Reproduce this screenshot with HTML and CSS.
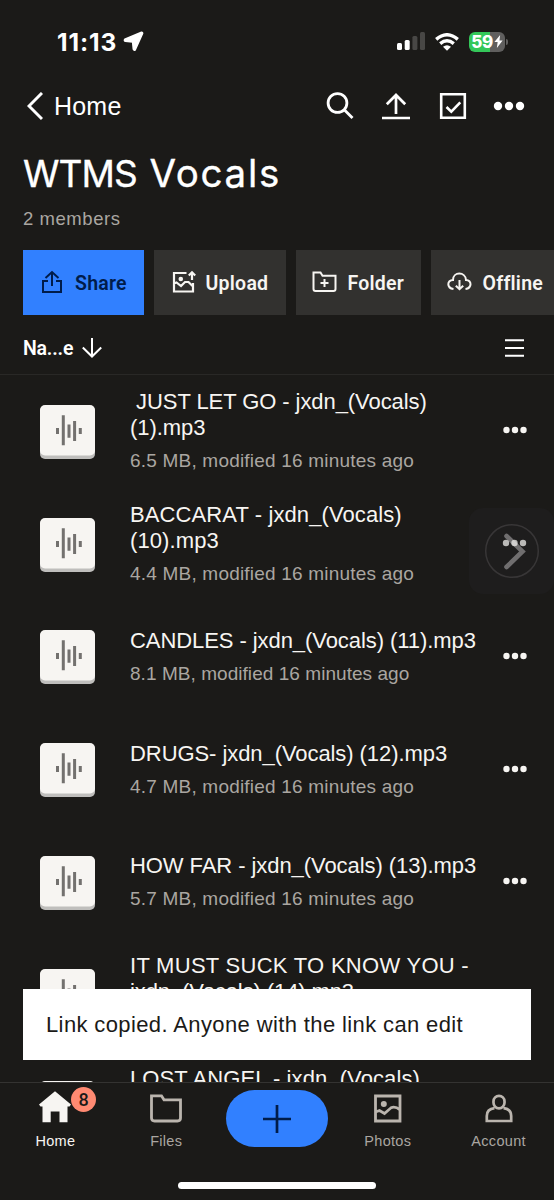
FILE: index.html
```
<!DOCTYPE html>
<html lang="en">
<head>
<meta charset="utf-8">
<title>WTMS Vocals</title>
<link rel="stylesheet" href="styles.css">
</head>
<body>
<svg class="defs" width="0" height="0">
  <symbol id="audio" viewBox="0 0 55 54">
    <rect y="1" width="55" height="53" rx="5" fill="#bfbebc"/>
    <rect width="55" height="50.5" rx="5" fill="#f7f5f2"/>
    <path d="M17.5 23v6M23.3 10.200v30M29 19.500v13.200M34.600 16v20M40.300 23v6" stroke="#73716f" stroke-width="3" fill="none"/>
  </symbol>
  <symbol id="dots" viewBox="0 0 24 8">
    <circle cx="3.500" cy="4" r="3.200"/><circle cx="12" cy="4" r="3.200"/><circle cx="20.500" cy="4" r="3.200"/>
  </symbol>
</svg>
<div class="app">
  <header class="status">
    <span class="time">11:13</span>
    <svg class="loc" width="21" height="21" viewBox="0 0 21 21"><path d="M18.500 1.300 1.800 8.300Q.8 9.600 2.300 10.300L9.600 10.900 10.300 18.300Q11 19.800 12.300 18.800L19.600 2.500Q19.700 1.200 18.500 1.300Z" fill="#fff" stroke="#fff" stroke-width="1.500" stroke-linejoin="round"/></svg>
    <svg class="signal" width="28" height="19" viewBox="0 0 28 19"><g fill="#fff"><rect y="11" width="5" height="7" rx="1.500"/><rect x="7.700" y="8" width="5" height="10" rx="1.500"/></g><g fill="#484745"><rect x="15.400" y="4" width="5" height="14" rx="1.500"/><rect x="23" y="0" width="5" height="18" rx="1.500"/></g></svg>
    <svg class="wifi" width="24" height="18" viewBox="0 0 24 18"><g fill="none" stroke="#fff" stroke-width="3.400"><path d="M1.200 6.400Q12-2.900 22.800 6.400"/><path d="M5.200 10.600Q12 5 18.800 10.600"/></g><path d="M8 13.700Q12 10.700 16 13.700L12 17.700Z" fill="#fff"/></svg>
    <div class="battery"><span>59</span><svg width="9" height="13" viewBox="0 0 8 12"><path d="M5.500 0 .2 6.500h3L2.500 12 7.800 5H4.900Z" fill="#fff"/></svg></div><i class="cap"></i>
  </header>

  <div class="toolbar">
    <svg width="16" height="29" viewBox="0 0 16 29"><path d="M15 1 2 14l13 13" fill="none" stroke="#fff" stroke-width="3"/></svg>
    <span class="back">Home</span>
    <div class="tools">
      <svg width="28" height="28" viewBox="0 0 28 28"><g fill="none" stroke="#fff" stroke-width="2.800"><circle cx="11.500" cy="11" r="9.400"/><path d="m18 17.500 8.500 8.500"/></g></svg>
      <svg width="28" height="28" viewBox="0 0 28 28"><path d="M14 22V3M4.800 12.300 14 3l9.200 9.300M0 26h28" fill="none" stroke="#fff" stroke-width="2.700"/></svg>
      <svg width="28" height="28" viewBox="0 0 28 28"><path d="M2.200 2.200h23.600v23.600H2.200ZM7.500 15l4.800 4.700 9-9.400" fill="none" stroke="#fff" stroke-width="2.600"/></svg>
      <svg class="overflow" width="32" height="10" viewBox="0 0 32 10" fill="#fff"><circle cx="5" cy="5" r="4.200"/><circle cx="16" cy="5" r="4.200"/><circle cx="27" cy="5" r="4.200"/></svg>
    </div>
  </div>

  <h1>WTMS <span>Vocals</span></h1>
  <p class="members">2 members</p>

  <div class="actions">
    <button class="act share"><svg width="22" height="24" viewBox="0 0 22 24"><path d="M7 11H2v11h18V11h-5M11 16V3M4.500 8 11 2l6.500 6" fill="none" stroke="currentColor" stroke-width="2"/></svg><span>Share</span></button>
    <button class="act upload"><svg width="24" height="24" viewBox="0 0 24 24"><path d="M14.500 3H2v18.500h19V13M2 13.500l2.500-1 4.500 3.500 4-4h3.500l4 4M20 10V3M16.800 5.500 20 2.300 23.200 5.500" fill="none" stroke="currentColor" stroke-width="2.200"/><circle cx="8.800" cy="9" r="2.300" fill="currentColor"/></svg><span>Upload</span></button>
    <button class="act folder"><svg width="25" height="22" viewBox="0 0 25 22"><path d="M1.500 1.500h7l2 3.200h13V18q0 2-2 2h-18q-2 0-2-2ZM12.500 8v8M8.500 12h8" fill="none" stroke="currentColor" stroke-width="2"/></svg><span>Folder</span></button>
    <button class="act offline"><svg width="25" height="20" viewBox="0 0 25 20"><path d="M6.500 17C-.5 16-.2 8 6 8 6-.6 18.500-.6 19 8c6 0 6.200 8-.5 9M12.500 8v9M8.800 13.700l3.700 3.500 3.700-3.500" fill="none" stroke="currentColor" stroke-width="2"/></svg><span>Offline</span></button>
  </div>

  <div class="sort"><span>Na...e</span>
    <svg width="20" height="20" viewBox="0 0 20 20"><path d="M10 0v18M.8 9.500 10 18.500l9.200-9" fill="none" stroke="#fff" stroke-width="2"/></svg>
    <svg class="view" width="19" height="18" viewBox="0 0 19 18"><path d="M0 1.200h19M0 9h19M0 16.800h19" stroke="#fff" stroke-width="2"/></svg>
  </div>

  <main class="list">
    <div class="row"><svg class="file"><use href="#audio"/></svg><div class="info"><div class="name">&nbsp;JUST LET GO - jxdn_(Vocals)<br>(1).mp3</div><div class="meta">6.5 MB, modified 16 minutes ago</div></div><svg class="more"><use href="#dots"/></svg></div>
    <div class="row"><svg class="file"><use href="#audio"/></svg><div class="info"><div class="name wide">BACCARAT - jxdn_(Vocals)<br>(10).mp3</div><div class="meta">4.4 MB, modified 16 minutes ago</div></div><svg class="more"><use href="#dots"/></svg></div>
    <div class="row"><svg class="file"><use href="#audio"/></svg><div class="info"><div class="name">CANDLES - jxdn_(Vocals) (11).mp3</div><div class="meta tight">8.1 MB, modified 16 minutes ago</div></div><svg class="more"><use href="#dots"/></svg></div>
    <div class="row"><svg class="file"><use href="#audio"/></svg><div class="info"><div class="name">DRUGS- jxdn_(Vocals) (12).mp3</div><div class="meta">4.7 MB, modified 16 minutes ago</div></div><svg class="more"><use href="#dots"/></svg></div>
    <div class="row"><svg class="file"><use href="#audio"/></svg><div class="info"><div class="name">HOW FAR - jxdn_(Vocals) (13).mp3</div><div class="meta">5.7 MB, modified 16 minutes ago</div></div><svg class="more"><use href="#dots"/></svg></div>
    <div class="row"><svg class="file"><use href="#audio"/></svg><div class="info"><div class="name caps">IT MUST SUCK TO KNOW YOU -<br><span class="wrap">jxdn_(Vocals) (14).mp3</span></div><div class="meta">&nbsp;</div></div></div>
    <div class="row"><svg class="file"><use href="#audio"/></svg><div class="info"><div class="name wide">LOST ANGEL - jxdn_(Vocals)<br>&nbsp;</div><div class="meta">&nbsp;</div></div></div>
  </main>

  <div class="assist"><svg width="56" height="56" viewBox="0 0 56 56"><circle cx="28" cy="28" r="26.300" fill="none" stroke="#383637" stroke-width="1.500"/><path d="M22.500 13 38.500 28.500 22.500 44" fill="none" stroke="#858384" stroke-opacity=".8" stroke-width="4.600" stroke-linecap="round"/><g fill="#f7f5f2" fill-opacity=".72"><circle cx="22" cy="20" r="3.200"/><circle cx="30.500" cy="20" r="3.200"/><circle cx="39" cy="20" r="3.200"/></g></svg></div>
  <div class="toast">Link copied. Anyone with the link can edit</div>

  <nav class="tabs">
    <div class="tab active"><svg width="32" height="32" viewBox="0 0 32 32"><path d="M16 .3 32 13.500 30.500 15.500H28.500V31.300H20.500V20.500H11.700V31.300H3.500V15.500H1.500L0 13.500Z" fill="#f7f5f2"/></svg><span>Home</span><b class="badge">8</b></div>
    <div class="tab"><svg width="32" height="32" viewBox="0 0 32 32"><path d="M1.500 4.800h10l2.500 4h16.500V27q0 3-3 3h-23q-3 0-3-3Z" fill="none" stroke="#bbb5ae" stroke-width="2.800"/></svg><span>Files</span></div>
    <div class="tab plus"><div class="pill"><svg width="28" height="28" viewBox="0 0 28 28"><path d="M14 0v28M0 14h28" stroke="#001c4a" stroke-width="2.700"/></svg></div></div>
    <div class="tab"><svg width="32" height="32" viewBox="0 0 32 32"><path d="M3.500 5h24.500v25H3.500ZM3.500 21l4-1.500 5 3L19 16.800q4-2 9 2" fill="none" stroke="#bbb5ae" stroke-width="2.800"/><circle cx="11.800" cy="13" r="3" fill="#bbb5ae"/></svg><span>Photos</span></div>
    <div class="tab"><svg width="32" height="32" viewBox="0 0 32 32"><g fill="none" stroke="#bbb5ae" stroke-width="2.700"><rect x="10.500" y="4.800" width="11" height="12.500" rx="5.500"/><path d="M11.500 17.200Q3.800 18 3.800 25V30H28.200V25Q28.200 18 20.500 17.200"/></g></svg><span>Account</span></div>
    <i class="indicator"></i>
  </nav>
</div>
</body>
</html>
```

FILE: styles.css
```
* { box-sizing: border-box; }
body { margin: 0; background: #1b1a18; color: #fff; font-family: "Liberation Sans", Arial, sans-serif; }
.defs { position: absolute; }
svg { display: block; flex: none; }
.app { position: relative; width: 554px; height: 1200px; display: flex; flex-direction: column; overflow: hidden; }
.app > * { flex: none; }

.status { height: 83px; display: flex; align-items: center; padding: 0 46px 0 57px; }
.time { width: 60px; font: 700 24.500px/30px Inter, sans-serif; letter-spacing: .9px; white-space: nowrap; }
.loc { margin-left: 6px; }
.signal { margin-left: auto; }
.wifi { margin-left: 10px; }
.battery { margin-left: 10px; width: 36px; height: 20px; border-radius: 6px; background: linear-gradient(90deg, #34c759 59%, #605f5e 59%); display: flex; align-items: center; justify-content: center; gap: 1px; font: 800 17px/20px Inter, sans-serif; letter-spacing: -.5px; }
.cap { width: 2px; height: 6px; margin-left: 1px; border-radius: 0 2px 2px 0; background: #605f5e; }

.toolbar { height: 46px; display: flex; align-items: center; padding: 0 29px 0 27px; }
.back { margin-left: 11px; font-size: 25px; line-height: 30px; letter-spacing: .2px; }
.tools { margin-left: auto; display: flex; align-items: center; gap: 28.500px; }
.overflow { margin-left: -2px; }

h1 { margin: 20px 0 0 23px; height: 48px; font: 400 37px/48px Inter, sans-serif; letter-spacing: -.9px; white-space: nowrap; -webkit-text-stroke: .35px #fff; }
h1 span { margin-left: 3px; font-size: 38.500px; letter-spacing: 1.700px; }
.members { margin: 8.500px 0 0 23px; font-size: 18.500px; line-height: 25px; letter-spacing: .55px; color: #aaa6a1; }

.actions { margin: 19px 0 0 23px; display: flex; gap: 9.500px; height: 65px; }
.act { flex: none; border: 0; padding: 0 0 0 18px; display: flex; align-items: center; background: #32312f; color: #f7f5f2; font: 600 19.500px/26px Roboto, sans-serif; letter-spacing: .25px; }
.act span { padding-top: 3px; }
.act.share { width: 121px; background: #3180ff; color: #001c4a; gap: 12px; }
.upload { width: 132.500px; gap: 10px; }
.folder { width: 125.500px; padding-left: 16px; gap: 11px; }
.offline { width: 133px; padding-left: 16px; gap: 11px; }

.sort { height: 60.500px; border-bottom: 1.500px solid #292826; display: flex; align-items: center; padding: 8px 30px 0 23px; font: 600 19.500px/26px Roboto, sans-serif; letter-spacing: -.2px; }
.sort span { padding-top: 2px; }
.sort svg { margin-left: 9px; }
.sort .view { margin-left: auto; }

.list { height: 707px; overflow: hidden; }
.row { height: 112.750px; display: flex; align-items: center; padding: 0 27.500px 0 40px; }
.file { width: 55px; height: 54px; margin-top: 1px; }
.info { margin: 1px 0 0 35px; }
.name { font-size: 22px; line-height: 26px; letter-spacing: -.07px; white-space: nowrap; color: #f7f5f2; }
.name.wide { letter-spacing: .1px; }
.name.caps { letter-spacing: .28px; }
.wrap { letter-spacing: -.1px; }
.meta { margin-top: 6px; font-size: 19px; line-height: 27px; letter-spacing: .2px; color: #aaa6a1; white-space: nowrap; }
.meta.tight { letter-spacing: .05px; }
.more { width: 24px; height: 8px; margin: -2px 0 0 auto; fill: #f7f5f2; }
.row:nth-child(2) .more { visibility: hidden; }

.assist { position: absolute; left: 469px; top: 508px; width: 85px; height: 86px; border-radius: 14px; display: flex; align-items: center; justify-content: center; background: #1e1d1d; }
.toast { position: absolute; left: 23px; top: 989px; width: 508px; height: 71px; background: #fff; color: #1b1a18; padding-left: 23px; font-size: 22px; line-height: 72px; letter-spacing: .38px; white-space: nowrap; }

.tabs { position: relative; height: 118px; border-top: 1px solid #343331; background: #1b1a18; display: grid; grid-template-columns: repeat(5, 1fr); }
.tab { position: relative; display: flex; flex-direction: column; align-items: center; padding-top: 8px; font-size: 14.500px; line-height: 20px; letter-spacing: .3px; color: #aaa6a1; }
.tab span { margin-top: 8px; }
.active { color: #f7f5f2; }
.badge { position: absolute; left: 71px; top: 4px; width: 25px; height: 25px; border-radius: 50%; background: #ff8a72; color: #1b1a18; font: 500 18px/26px Roboto, sans-serif; text-align: center; letter-spacing: 0; }
.plus { padding-top: 7px; }
.pill { width: 102px; height: 57px; border-radius: 29px; background: #3180ff; display: flex; align-items: center; justify-content: center; }
.indicator { position: absolute; left: 178px; top: 99px; width: 198px; height: 7px; border-radius: 4px; background: #fff; }
```
